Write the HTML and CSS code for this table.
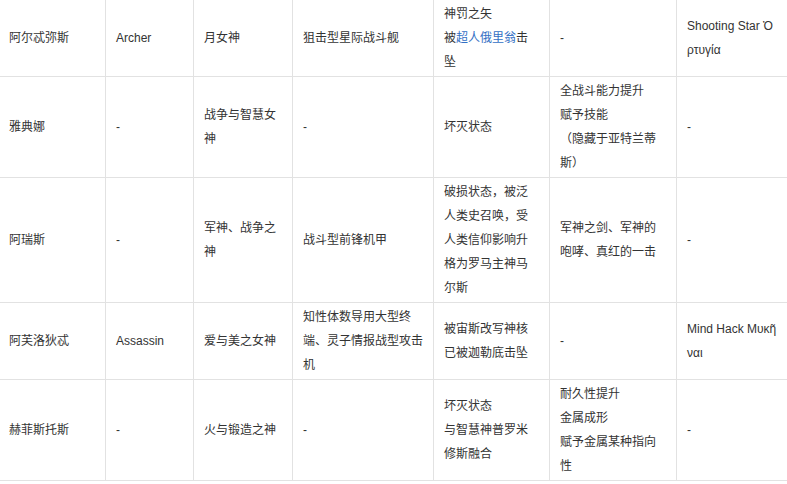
FILE: index.html
```html
<!DOCTYPE html>
<html lang="zh-CN">
<head>
<meta charset="utf-8">
<title>表</title>
<link rel="stylesheet" href="styles.css">
</head>
<body>
<table class="servant-table">
  <colgroup>
    <col class="c1"><col class="c2"><col class="c3"><col class="c4"><col class="c5"><col class="c6"><col class="c7">
  </colgroup>
  <tbody>
    <tr>
      <td>阿尔忒弥斯</td>
      <td>Archer</td>
      <td>月女神</td>
      <td>狙击型星际战斗舰</td>
      <td>神罚之矢<br>被<a class="link" href="#">超人俄里翁</a>击坠</td>
      <td>-</td>
      <td class="nowrap">Shooting Star Ὀ<br>ρτυγία</td>
    </tr>
    <tr>
      <td>雅典娜</td>
      <td>-</td>
      <td>战争与智慧女神</td>
      <td>-</td>
      <td>坏灭状态</td>
      <td>全战斗能力提升<br>赋予技能<br>（隐藏于亚特兰蒂斯）</td>
      <td>-</td>
    </tr>
    <tr>
      <td>阿瑞斯</td>
      <td>-</td>
      <td>军神、战争之神</td>
      <td>战斗型前锋机甲</td>
      <td>破损状态，被泛人类史召唤，受人类信仰影响升格为罗马主神马尔斯</td>
      <td>军神之剑、军神的咆哮、真红的一击</td>
      <td>-</td>
    </tr>
    <tr>
      <td>阿芙洛狄忒</td>
      <td>Assassin</td>
      <td>爱与美之女神</td>
      <td>知性体数导用大型终端、灵子情报战型攻击机</td>
      <td>被宙斯改写神核<br>已被迦勒底击坠</td>
      <td>-</td>
      <td class="nowrap">Mind Hack Μυκῆ<br>ναι</td>
    </tr>
    <tr>
      <td>赫菲斯托斯</td>
      <td>-</td>
      <td>火与锻造之神</td>
      <td>-</td>
      <td>坏灭状态<br>与智慧神普罗米修斯融合</td>
      <td>耐久性提升<br>金属成形<br>赋予金属某种指向性</td>
      <td>-</td>
    </tr>
  </tbody>
</table>
</body>
</html>
```
FILE: styles.css
```css
html, body {
  margin: 0;
  padding: 0;
  background: #ffffff;
  overflow: hidden;
}

.servant-table {
  border-collapse: collapse;
  table-layout: fixed;
  width: 790px;
  margin: -1px 0 0 -2px;
  font-family: "Liberation Sans", "Noto Sans CJK SC", sans-serif;
  font-size: 12px;
  line-height: 24px;
  color: #333333;
}

.servant-table td {
  border: 1px solid #e2e2e2;
  padding: 2px 10px;
  vertical-align: middle;
  text-align: left;
}

.c1 { width: 107px; }
.c2 { width: 88px; }
.c3 { width: 99px; }
.c4 { width: 141px; }
.c5 { width: 116px; }
.c6 { width: 127px; }
.c7 { width: 112px; }

.nowrap { white-space: nowrap; }

.link {
  color: #3370c4;
  text-decoration: none;
}
```
